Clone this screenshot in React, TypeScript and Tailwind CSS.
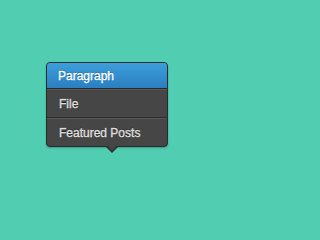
import React from 'react';

const items = ['Paragraph', 'File', 'Featured Posts'];

export default function App() {
    return (
        <div
            className="min-w-[220px] w-full min-h-screen bg-[#51ceb2] pt-[62px] pl-[46px]"
            style={{ fontFamily: '"Liberation Sans", Arial, sans-serif' }}
        >
            <div className="relative w-[122px]">
                <div className="rounded-[4px] border border-[#2b2b2b] bg-[#464646] shadow-[0_1px_2px_rgba(0,0,0,0.25)] overflow-hidden">
                    {/* Active item */}
                    <div className="h-[26px] flex items-center pl-[11px] text-[12px] text-white bg-gradient-to-b from-[#3d9edb] to-[#2a7fc1] border-b border-[#2a2a2a] [-webkit-text-stroke:0.3px_#ffffff] [text-shadow:0_-1px_0_rgba(0,0,0,0.35)]">
                        {items[0]}
                    </div>
                    <div className="h-[29px] flex items-center pl-[12px] text-[12px] text-[#e0e0e0] border-t border-[#585858] border-b border-b-[#2c2c2c] [-webkit-text-stroke:0.3px_#e0e0e0] [text-shadow:0_-1px_0_rgba(0,0,0,0.6)]">
                        {items[1]}
                    </div>
                    <div className="h-[28px] flex items-center pl-[12px] text-[12px] text-[#e0e0e0] border-t border-[#585858] [-webkit-text-stroke:0.3px_#e0e0e0] [text-shadow:0_-1px_0_rgba(0,0,0,0.6)]">
                        {items[2]}
                    </div>
                </div>
                {/* Pointer */}
                <div className="absolute left-[60px] top-full w-0 h-0 border-l-[6px] border-r-[6px] border-t-[6px] border-l-transparent border-r-transparent border-t-[#2f2f2f]" />
                <div className="absolute left-[61px] top-[calc(100%-2px)] w-0 h-0 border-l-[5px] border-r-[5px] border-t-[6px] border-l-transparent border-r-transparent border-t-[#464646]" />
            </div>
        </div>
    );
}
